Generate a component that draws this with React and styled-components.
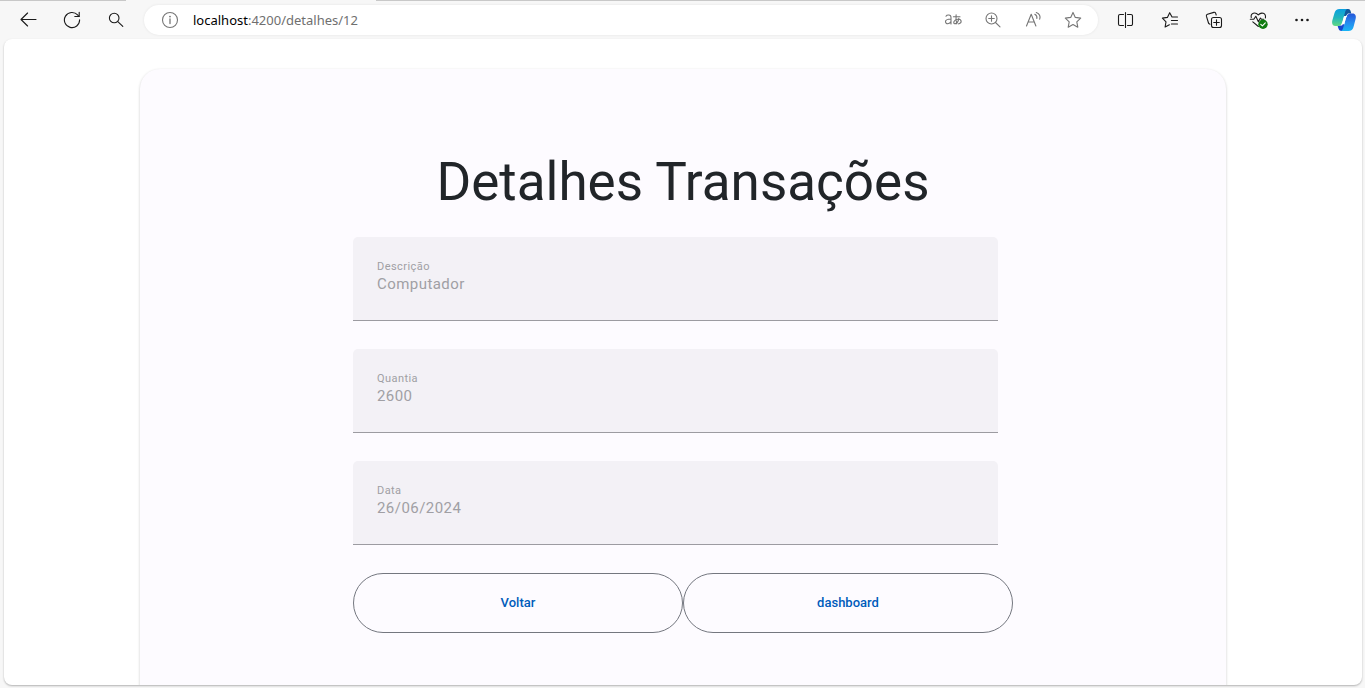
import React from "react";
import styled, { createGlobalStyle } from "styled-components";

const GlobalStyle = createGlobalStyle`
  *, *::before, *::after { box-sizing: border-box; }
  body { margin: 0; background: #f7f7f7; font-family: Roboto, "Liberation Sans", sans-serif; }
`;

const Browser = styled.div`
  display: flex;
  flex-direction: column;
  height: 100vh;
  background: #f7f7f7;
`;

const TabEdge = styled.div`
  display: flex;
  justify-content: space-between;
  flex: none;
  height: 1px;
  background: #c8c8c8;
`;

const ActiveTab = styled.div`
  width: 250px;
  margin-left: 126px;
  background: #f7f7f7;
`;

const Toolbar = styled.header`
  display: flex;
  align-items: center;
  flex: none;
  height: 38px;
  padding-left: 6px;
`;

const ToolButton = styled.button`
  display: flex;
  align-items: center;
  justify-content: center;
  flex: none;
  width: ${(p) => p.$width || 44}px;
  height: 30px;
  padding: 0;
  border: 0;
  background: none;
  color: ${(p) => (p.$muted ? "#767676" : "#1a1a1a")};
`;

const AddressBar = styled.div`
  display: flex;
  align-items: center;
  flex: 1;
  min-width: 0;
  height: 30px;
  margin: 0 6px;
  padding: 0 5px 0 6px;
  border-radius: 15px;
  background: #fff;
  box-shadow: 0 0 3px rgba(0, 0, 0, 0.08);
`;

const Address = styled.div`
  flex: 1;
  min-width: 0;
  padding-left: 3px;
  overflow: hidden;
  white-space: nowrap;
  font: 13px/20px "Noto Sans", "Open Sans", sans-serif;
  color: #6f6f6f;
`;

const Host = styled.span`
  color: #000;
`;

const Viewport = styled.main`
  flex: 1;
  min-height: 0;
  margin: 0 3px 3px 4px;
  padding-top: 30px;
  overflow: hidden;
  border-radius: 8px;
  background: #fff;
  box-shadow: 0 1px 2px rgba(0, 0, 0, 0.28);
`;

const Card = styled.section`
  display: flex;
  justify-content: center;
  width: 80%;
  min-height: 100%;
  margin: 0 auto;
  padding: 81px 16px;
  border-radius: 20px;
  background: #fdfbff;
  box-shadow: 0 1px 3px rgba(0, 0, 0, 0.2);
`;

const Form = styled.form`
  width: 100%;
  max-width: 660px;
`;

const Title = styled.h1`
  margin: 0 0 23px;
  font-size: 53px;
  font-weight: 400;
  line-height: 64px;
  text-align: center;
  color: #212529;
`;

const Field = styled.div`
  display: flex;
  flex-direction: column;
  height: 84px;
  margin: 0 15px 28px 0;
  padding: 23px 24px 0;
  border-bottom: 1px solid #9c9ba1;
  border-radius: 5px 5px 0 0;
  background: #f3f1f6;
`;

const Label = styled.label`
  font-size: 11px;
  line-height: 14px;
  letter-spacing: 0.04em;
  color: #a09fa4;
`;

const Input = styled.input`
  width: 100%;
  height: 20px;
  padding: 0;
  border: 0;
  background: none;
  font: 15px/20px Roboto, "Liberation Sans", sans-serif;
  letter-spacing: 0.03em;
  color: #a09fa4;
  opacity: 1;
`;

const Actions = styled.div`
  display: flex;
`;

const ActionButton = styled.button`
  flex: 1;
  height: 60px;
  padding: 0 24px;
  border: 1px solid #74777f;
  border-radius: 30px;
  background: none;
  font: 500 13px/20px Roboto, "Liberation Sans", sans-serif;
  color: #005cbb;
`;

const Line = ({ size = 18, children, ...rest }) => (
  <svg
    width={size}
    height={size}
    viewBox={`0 0 ${size} ${size}`}
    fill="none"
    stroke="currentColor"
    strokeWidth="1.1"
    strokeLinecap="round"
    strokeLinejoin="round"
    aria-hidden="true"
    {...rest}
  >
    {children}
  </svg>
);

const BackIcon = () => (
  <Line>
    <path d="M17 8.5H2M8.6 2L2 8.5L8.6 15" />
  </Line>
);

const ReloadIcon = () => (
  <Line>
    <path d="M16.6 8.8A7.6 7.6 0 1 1 14.6 3.9L16 5.5" />
    <path d="M16.2 1.3V5.5H11.8" />
  </Line>
);

const SearchIcon = () => (
  <Line>
    <circle cx="7.2" cy="7" r="4.8" />
    <path d="M10.8 10.6L15.8 15.4" />
  </Line>
);

const InfoIcon = () => (
  <Line>
    <circle cx="9" cy="9" r="7.5" />
    <path d="M9 8V12.5" strokeWidth="1.3" />
    <circle cx="9" cy="5.6" r="0.9" fill="currentColor" stroke="none" />
  </Line>
);

const TranslateIcon = () => (
  <Line>
    <path d="M2 5.2C2.9 3.7 7 3.3 7 6.4V13M7 8C4.3 8.1 1.5 8.4 1.5 10.6C1.5 13.7 6 13.2 7 10.5" />
    <path
      d="M9.4 5.7H16M12.1 3.8C11.8 7 11.9 10 12.9 12.8M14.9 7.2C14.4 10.4 12.5 12.8 10.7 12.8C8.9 12.5 9.6 8.4 13.9 8.2C18 8 18.2 12.1 14.6 12.9"
    />
  </Line>
);

const ZoomIcon = () => (
  <Line>
    <circle cx="7.5" cy="7.5" r="5.5" />
    <path d="M11.5 11.5L16 15.8M4.7 7.5H10.3M7.5 4.7V10.3" />
  </Line>
);

const ReadAloudIcon = () => (
  <Line>
    <path d="M2.5 15L7.2 3.2L11.9 15M4.2 11H10.3" />
    <path d="M10.8 3.2C12.5 4 13.2 5.5 12.9 7.5M12.3 1.5C15.4 2.8 16.6 5.4 15.7 8.2" />
  </Line>
);

const StarIcon = () => (
  <Line>
    <path d="M9 1.4L11.3 6.4L16.7 7.1L12.8 10.8L13.8 16.2L9 13.5L4.2 16.2L5.2 10.8L1.3 7.1L6.7 6.4Z" />
  </Line>
);

const SplitIcon = () => (
  <Line>
    <path
      d="M6.5 3.5H3A1.5 1.5 0 0 0 1.5 5V13A1.5 1.5 0 0 0 3 14.5H6.5M10.5 3.5H14A1.5 1.5 0 0 1 15.5 5V13A1.5 1.5 0 0 1 14 14.5H10.5M8.5 1.5V16.5"
    />
  </Line>
);

const FavoritesIcon = () => (
  <Line>
    <path d="M16.5 6H11L8.7 1.7L6.4 6.4L1.4 7.1L5 10.8L4.1 16L8.4 13.8M10.4 9.5H16.5M10.4 13H16.5" />
  </Line>
);

const CollectionsIcon = () => (
  <Line>
    <path d="M3.5 12L1.4 5.2Q1 3.7 2.5 3.2L8.8 1.4Q10.2 1 10.7 2.4L11.2 4" />
    <path d="M3.5 12Q4 13 5 13.2" />
    <rect x="6.5" y="6.5" width="10" height="10" rx="2" />
    <path d="M11.5 8.7V14.3M8.7 11.5H14.3" />
  </Line>
);

const HealthIcon = () => (
  <Line size={20}>
    <path d="M3.2 7.5C2.4 2.7 7.4 1.7 10.3 4.9C13.2 1.7 18.3 2.9 17.4 8" />
    <path d="M2.3 9.3H5.8L7.8 6.3L10.4 11.7L12.4 8.1L13.6 9.3H15.6M4.8 11.9L10.4 16.5" />
    <circle cx="15" cy="14.2" r="4.7" fill="#107c10" stroke="none" />
    <path d="M12.8 14.3L14.4 15.8L17.3 12.8" stroke="#fff" />
  </Line>
);

const MoreIcon = () => (
  <Line>
    <g fill="currentColor" stroke="none">
      <circle cx="3.5" cy="9" r="1.3" />
      <circle cx="9" cy="9" r="1.3" />
      <circle cx="14.5" cy="9" r="1.3" />
    </g>
  </Line>
);

const CopilotIcon = () => (
  <svg width="26" height="24" viewBox="1 0 26 24" aria-hidden="true">
    <defs>
      <linearGradient id="leftLoop" x1="0" y1="0" x2="0" y2="1">
        <stop offset="0" stopColor="#0a9fe0" />
        <stop offset="0.5" stopColor="#20b4bd" />
        <stop offset="1" stopColor="#62d982" />
      </linearGradient>
      <linearGradient id="rightLoop" x1="0" y1="0" x2="0" y2="1">
        <stop offset="0" stopColor="#2455d8" />
        <stop offset="0.5" stopColor="#2688ee" />
        <stop offset="1" stopColor="#18b5f5" />
      </linearGradient>
    </defs>
    <path d="M13 1H17C19.3 1 19.7 3 20.3 5.5H17L13 10Z" fill="#12579b" />
    <path d="M6.5 17.5H11L13 14V23H10.5C7.7 23 7.4 20 6.5 17.5Z" fill="#1646cf" />
    <path
      d="M8.7 1H16.5C14.7 1.4 14.3 3.4 13.8 5.2L11.5 13.5C10.8 16.2 9.7 18 6.8 18H4.5C1.5 18 .6 15.5 1.3 12.4L3.5 5C4.3 2.4 5.8 1 8.7 1Z"
      fill="url(#leftLoop)"
    />
    <path
      d="M17.3 23H9.8C11.5 22.6 12 20.7 12.5 18.8L14.8 10.5C15.5 7.7 16.7 5.5 19.3 5.5H21.5C24.5 5.5 25.4 8 24.6 11L22.5 19C21.8 21.7 20.2 23 17.3 23Z"
      fill="url(#rightLoop)"
    />
    <path d="M13.2 8H16.2C15.2 9.1 14.8 10.5 14.4 12L13.2 16.2H10.5C11.3 15.2 11.7 13.5 12 12.2Z" fill="#fff" />
  </svg>
);

const navigation = [
  { name: "Back", Icon: BackIcon },
  { name: "Refresh", Icon: ReloadIcon },
  { name: "Search", Icon: SearchIcon },
];

const pageTools = [
  { name: "Translate", Icon: TranslateIcon },
  { name: "Zoom", Icon: ZoomIcon },
  { name: "Read aloud", Icon: ReadAloudIcon },
  { name: "Add to favorites", Icon: StarIcon },
];

const browserTools = [
  { name: "Split screen", Icon: SplitIcon },
  { name: "Favorites", Icon: FavoritesIcon },
  { name: "Collections", Icon: CollectionsIcon },
  { name: "Browser essentials", Icon: HealthIcon },
  { name: "Settings and more", Icon: MoreIcon },
];

const fields = [
  { id: "descricao", label: "Descrição", value: "Computador" },
  { id: "quantia", label: "Quantia", value: "2600" },
  { id: "data", label: "Data", value: "26/06/2024" },
];

const ToolGroup = ({ items, ...rest }) =>
  items.map(({ name, Icon }) => (
    <ToolButton key={name} type="button" aria-label={name} {...rest}>
      <Icon />
    </ToolButton>
  ));

export default function App() {
  return (
    <Browser>
      <GlobalStyle />
      <TabEdge>
        <ActiveTab />
      </TabEdge>
      <Toolbar>
        <ToolGroup items={navigation} />
        <AddressBar>
          <ToolButton type="button" aria-label="Site information" $muted $width={40}>
            <InfoIcon />
          </ToolButton>
          <Address>
            <Host>localhost</Host>:4200/detalhes/12
          </Address>
          <ToolGroup items={pageTools} $muted $width={40} />
        </AddressBar>
        <ToolGroup items={browserTools} />
        <ToolButton type="button" aria-label="Copilot" $width={41}>
          <CopilotIcon />
        </ToolButton>
      </Toolbar>
      <Viewport>
        <Card>
          <Form onSubmit={(event) => event.preventDefault()}>
            <Title>Detalhes Transações</Title>
            {fields.map(({ id, label, value }) => (
              <Field key={id}>
                <Label htmlFor={id}>{label}</Label>
                <Input id={id} defaultValue={value} disabled />
              </Field>
            ))}
            <Actions>
              <ActionButton type="button">Voltar</ActionButton>
              <ActionButton type="button">dashboard</ActionButton>
            </Actions>
          </Form>
        </Card>
      </Viewport>
    </Browser>
  );
}
